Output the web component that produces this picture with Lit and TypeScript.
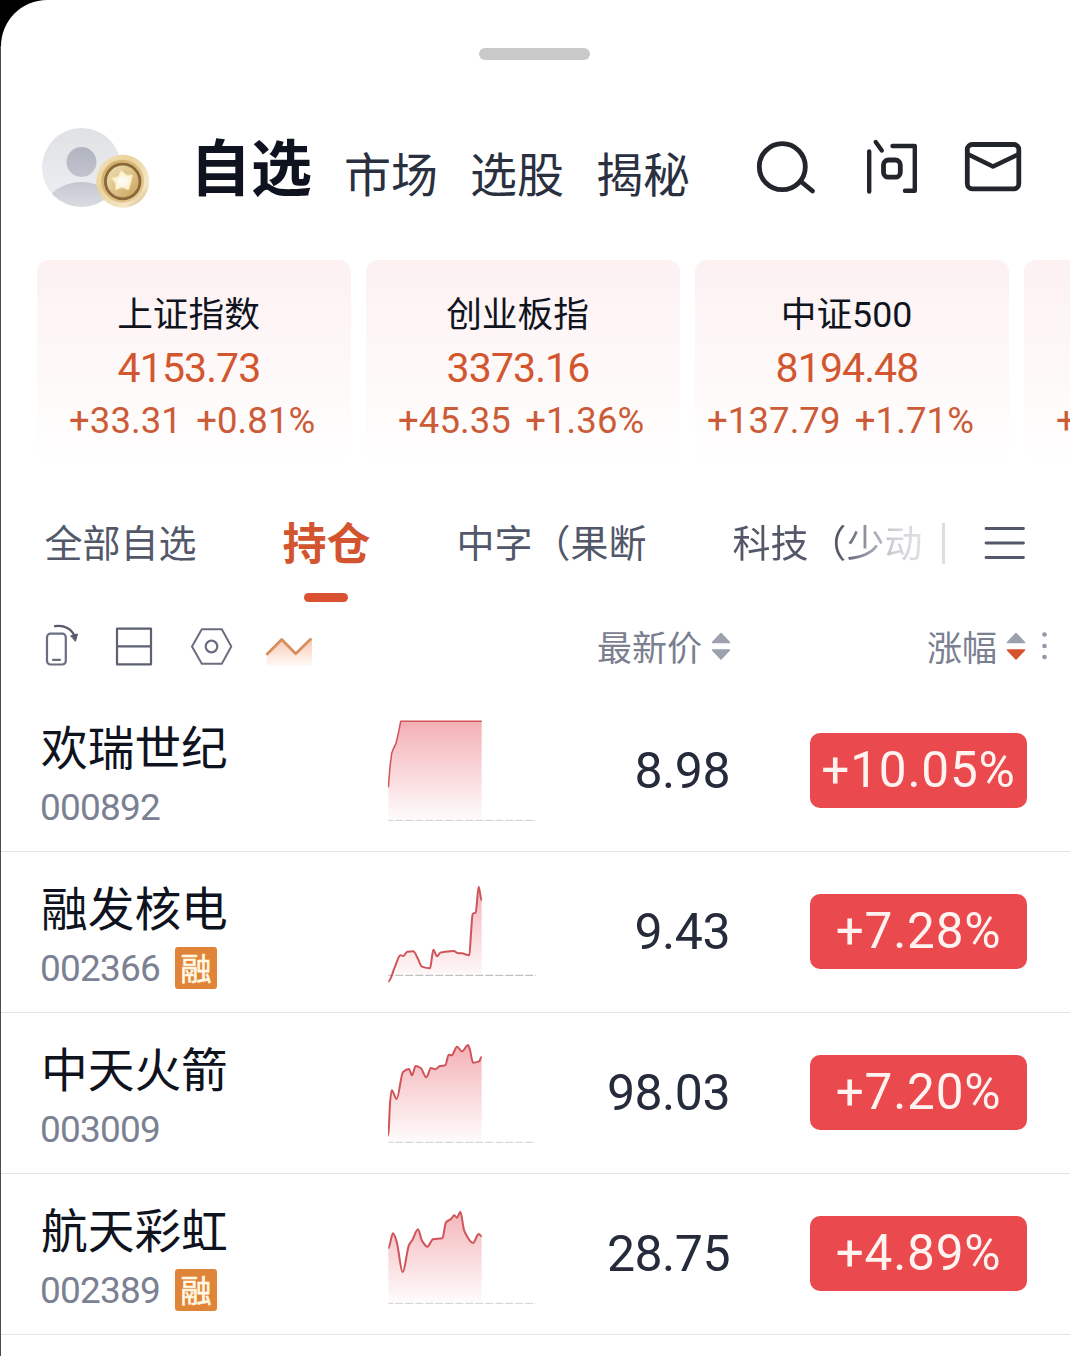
import { LitElement, html, svg, css } from "lit";
import { customElement, property } from "lit/decorators.js";
import { classMap } from "lit/directives/class-map.js";

type Point = [number, number];

interface Stock {
  name: string;
  code: string;
  margin: boolean;
  price: string;
  change: string;
  base: number;
  smooth: boolean;
  points: Point[];
}

interface IndexQuote {
  name: string;
  value: string;
  change: string;
  wide?: boolean;
}

const INDICES: IndexQuote[] = [
  { name: "上证指数", value: "4153.73", change: "+33.31 +0.81%" },
  { name: "创业板指", value: "3373.16", change: "+45.35 +1.36%" },
  { name: "中证500", value: "8194.48", change: "+137.79 +1.71%", wide: true },
  { name: "", value: "", change: "+" },
];

// Chart points live on a 450 x 480 grid, three units per pixel.
const STOCKS: Stock[] = [
  {
    name: "欢瑞世纪", code: "000892", margin: false, price: "8.98", change: "+10.05%", base: 388, smooth: false,
    points: [[1, 289], [6, 227], [11, 187], [15, 176], [24, 157], [31, 127], [38, 91], [281, 91]],
  },
  {
    name: "融发核电", code: "002366", margin: true, price: "9.43", change: "+7.28%", base: 370, smooth: true,
    points: [[1, 389], [21, 344], [37, 310], [46, 312], [58, 299], [76, 298], [89, 319], [102, 344], [126, 349], [130, 329], [136, 293], [147, 313], [157, 302], [171, 299], [198, 297], [208, 303], [221, 304], [244, 310], [249, 244], [254, 186], [263, 181], [272, 104], [281, 146]],
  },
  {
    name: "中天火箭", code: "003009", margin: false, price: "98.03", change: "+7.20%", base: 388, smooth: true,
    points: [[1, 368], [6, 271], [11, 232], [26, 258], [45, 177], [63, 168], [72, 187], [83, 159], [98, 165], [115, 193], [129, 165], [142, 169], [156, 159], [172, 157], [182, 125], [191, 127], [207, 101], [222, 115], [240, 96], [246, 111], [255, 149], [273, 145], [281, 131]],
  },
  {
    name: "航天彩虹", code: "002389", margin: true, price: "28.75", change: "+4.89%", base: 388, smooth: true,
    points: [[1, 223], [15, 178], [26, 203], [44, 295], [63, 213], [73, 198], [90, 166], [102, 200], [118, 218], [135, 196], [163, 193], [174, 145], [189, 135], [199, 124], [207, 131], [217, 113], [229, 171], [255, 207], [272, 180], [281, 187]],
  },
];

function linePath(points: Point[], smooth: boolean): string {
  let d = `M${points[0][0]} ${points[0][1]}`;
  for (let i = 1; i < points.length; i++) {
    const [x1, y1] = points[i - 1];
    const [x2, y2] = points[i];
    if (!smooth) {
      d += `L${x2} ${y2}`;
      continue;
    }
    const slope = (k: number): number => {
      if (k <= 0 || k >= points.length - 1) return 0;
      const a = (points[k][1] - points[k - 1][1]) / (points[k][0] - points[k - 1][0]);
      const b = (points[k + 1][1] - points[k][1]) / (points[k + 1][0] - points[k][0]);
      return a * b <= 0 ? 0 : (2 * a * b) / (a + b);
    };
    const h = (x2 - x1) / 3;
    d += `C${x1 + h} ${y1 + slope(i - 1) * h} ${x2 - h} ${y2 - slope(i) * h} ${x2} ${y2}`;
  }
  return d;
}

@customElement("stock-row")
export class StockRow extends LitElement {
  @property({ attribute: false }) stock!: Stock;

  static styles = css`
    :host { display: block; }
    .row {
      display: grid;
      grid-template-columns: 347px 150px 232px 1fr;
      height: 161px;
      box-sizing: border-box;
      border-bottom: 1px solid #e4e5e8;
      padding: 0 43px 0 40px;
    }
    .title { display: flex; flex-direction: column; padding-top: 26px; }
    .name { font-size: 46.7px; line-height: 56px; color: #0f131e; }
    .meta { display: flex; align-items: center; gap: 15px; height: 42px; margin: 13px 0 0 -1px; }
    .code { font-size: 37px; letter-spacing: -0.8px; line-height: 42px; padding-top: 2px; color: #7b8192; font-family: Roboto, sans-serif; }
    .tag {
      display: flex; align-items: flex-start; justify-content: center;
      width: 42px; height: 42px; border-radius: 3px; background: #e08438;
      color: #fff8e4; font-size: 31px; line-height: 39px; -webkit-text-stroke: 0.6px #fff8e4;
    }
    .chart { width: 150px; height: 160px; display: block; }
    .price {
      font-family: Roboto, sans-serif; font-size: 50px; letter-spacing: -0.5px; line-height: 58px;
      color: #262b3b; text-align: right; padding: 51px 40px 0 0;
    }
    .rate {
      justify-self: end; margin-top: 42px; width: 217px; height: 75px; border-radius: 10px; background: #ea4a4d;
      color: #fff3f1; font-family: Roboto, sans-serif; font-size: 49.5px; line-height: 74px; text-align: center; letter-spacing: 0.8px;
    }
  `;

  render() {
    const s = this.stock;
    const line = linePath(s.points, s.smooth);
    return html`
      <div class="row">
        <div class="title">
          <div class="name">${s.name}</div>
          <div class="meta">
            <span class="code">${s.code}</span>
            ${s.margin ? html`<span class="tag">融</span>` : null}
          </div>
        </div>
        <svg class="chart" viewBox="0 0 450 480">
          <defs>
            <linearGradient id="g" gradientUnits="userSpaceOnUse" x1="0" y1="92" x2="0" y2="388">
              <stop offset="0" stop-color="#e8606a" stop-opacity=".5" />
              <stop offset="1" stop-color="#ea6a72" stop-opacity=".02" />
            </linearGradient>
          </defs>
          <path d="${line}L281 ${s.base}L1 ${s.base}Z" fill="url(#g)" />
          <path d="M1 ${s.base}H444" stroke="${s.base < 388 ? "#b4b4b6" : "#cfcfd1"}" stroke-width="3" stroke-dasharray="24 6" stroke-dashoffset="9" />
          <path d="${line}" fill="none" stroke="#cf5459" stroke-width="${s.smooth ? 6 : 4.5}" stroke-linejoin="round" />
        </svg>
        <div class="price">${s.price}</div>
        <div class="rate">${s.change}</div>
      </div>
    `;
  }
}

@customElement("app-root")
export class AppRoot extends LitElement {
  static styles = css`
    :host {
      display: block; width: 1070px; height: 1356px; overflow: hidden;
      background: linear-gradient(#000 0 46px, #4c4c4e 46px);
      font-family: "Noto Sans CJK SC", sans-serif;
    }
    .sheet {
      margin-left: 1px; height: 1356px; background: #fff; border-top-left-radius: 46px;
      display: flex; flex-direction: column; overflow: hidden;
    }
    svg { display: block; flex: none; }
    .grip { width: 111px; height: 12px; border-radius: 6px; background: #c9c9ca; margin: 48px 0 0 478px; flex: none; }
    .header { display: flex; height: 84px; margin: 66px 0 0 41px; flex: none; }
    .nav { display: flex; padding-left: 40px; width: 600px; height: 84px; align-items: flex-start; flex: none; box-sizing: border-box; }
    .nav-item { font-size: 47px; line-height: 92px; color: #2a3040; margin-left: 32px; white-space: nowrap; }
    .nav-item.on { font-size: 61px; line-height: 78px; font-weight: 700; color: #0e131f; margin: 0; }
    .indices { display: flex; gap: 15px; margin: 50px 0 0 36px; height: 200px; flex: none; }
    .index {
      flex: none; width: 314px; height: 200px; border-radius: 12px; box-sizing: border-box;
      background: linear-gradient(#fdf1f2, #fef8f8 50%, #fffefe);
      padding-top: 28px; white-space: nowrap;
    }
    .index-name { font-family: Roboto, "Noto Sans CJK SC", sans-serif; font-size: 35.7px; line-height: 54px; height: 54px; padding-right: 11px; text-align: center; color: #10141f; }
    .index-value { font-family: Roboto, sans-serif; font-size: 41px; letter-spacing: -0.9px; line-height: 52px; height: 52px; padding-right: 10px; text-align: center; color: #d2572f; }
    .index-change { font-family: Roboto, sans-serif; font-size: 36.5px; letter-spacing: 0.1px; word-spacing: 5px; line-height: 54px; padding-left: 32px; color: #cc5b38; }
    .index-change.wide { padding-left: 12px; }
    .tabs { display: flex; height: 62px; margin-top: 52px; padding-left: 43.5px; flex: none; align-items: center; }
    .tab-list { display: flex; align-items: center; width: 897.5px; height: 62px; flex: none; }
    .tab { font-size: 38px; line-height: 58px; height: 62px; color: #525869; white-space: nowrap; margin-right: 86px; flex: none; }
    .tab.on { font-size: 44px; font-weight: 700; color: #d2552f; }
    .tab.fade {
      margin: 0; background: linear-gradient(90deg, #525869 56%, #cdd0d6 84%, #e0e2e5);
      background-clip: text; -webkit-background-clip: text; color: transparent;
    }
    .rule { width: 3px; height: 41px; background: #dddee2; flex: none; }
    .menu { margin-left: 38px; }
    .underline { width: 44px; height: 9px; border-radius: 5px; background: #d95130; margin: 19px 0 0 303px; flex: none; }
    .columns { display: flex; align-items: center; height: 50px; margin-top: 20px; padding-left: 42px; flex: none; }
    .tools { width: 554px; flex: none; }
    .column { font-size: 35px; line-height: 48px; height: 50px; color: #7b8091; white-space: nowrap; }
    .sort { margin-left: 8px; }
    .spacer { width: 195px; flex: none; }
    .list { margin-top: 19px; }
  `;

  private sortIcon(active: boolean) {
    return html`<svg class="sort" width="22" height="32" viewBox="0 0 22 32">
      <path d="M11 2.500L19.500 11.500H2.500Z" fill="#9da1ae" stroke="#9da1ae" stroke-width="1.600" stroke-linejoin="round" />
      <path d="M11 28L19.500 19H2.500Z" fill=${active ? "#d5532d" : "#9da1ae"} stroke=${active ? "#d5532d" : "#9da1ae"} stroke-width="1.600" stroke-linejoin="round" />
    </svg>`;
  }

  private avatar() {
    return html`<svg width="108" height="84" viewBox="42 126 108 84">
      <defs>
        <linearGradient id="face" x1="0" y1="0" x2="0" y2="1"><stop offset="0" stop-color="#dfe1e5" /><stop offset="1" stop-color="#eff0f3" /></linearGradient>
        <linearGradient id="head" x1="0" y1="0" x2="0" y2="1"><stop offset="0" stop-color="#b1b5c0" /><stop offset="1" stop-color="#c1c4cd" /></linearGradient>
        <linearGradient id="body" x1="0" y1="182" x2="0" y2="207" gradientUnits="userSpaceOnUse"><stop offset="0" stop-color="#c4c7d0" /><stop offset="1" stop-color="#dadce1" /></linearGradient>
        <linearGradient id="rim" x1="0" y1="0" x2="1" y2="1"><stop offset="0" stop-color="#f3e2b8" /><stop offset=".35" stop-color="#ead39d" /><stop offset=".75" stop-color="#f5e8c8" /><stop offset="1" stop-color="#c9a45e" /></linearGradient>
        <linearGradient id="ring" x1="0" y1="0" x2="1" y2="1"><stop offset="0" stop-color="#cfa964" /><stop offset="1" stop-color="#e9d09a" /></linearGradient>
        <linearGradient id="core" x1="0" y1="0" x2="1" y2="1"><stop offset="0" stop-color="#f3e4bd" /><stop offset="1" stop-color="#c99f54" /></linearGradient>
        <clipPath id="round"><circle cx="81.500" cy="167.500" r="39.500" /></clipPath>
      </defs>
      <circle cx="81.500" cy="167.500" r="39.500" fill="url(#face)" />
      <circle cx="81.500" cy="162" r="15" fill="url(#head)" />
      <ellipse cx="81.500" cy="207" rx="35" ry="25" fill="url(#body)" clip-path="url(#round)" />
      <circle cx="122.700" cy="181.200" r="26.500" fill="url(#rim)" />
      <circle cx="122.700" cy="181.200" r="21.500" fill="url(#ring)" />
      <circle cx="122.700" cy="181.500" r="17.300" fill="url(#core)" stroke="#89683a" stroke-width="2.800" />
      <path d="M121 170.500L126.500 175L132.500 175L131 182L128.500 190L122 187.500L115.500 190L115.500 183.500L111.500 178L118 176.500Z" fill="#fcf3d9" stroke="#f3dfae" stroke-width="1" stroke-linejoin="round" />
      <path d="M121 176L128 179L127 185L120 186L117 181Z" fill="#fffaf0" />
    </svg>`;
  }

  private headerIcons() {
    return html`<svg width="290" height="84" viewBox="750 126 290 84" fill="none" stroke="#22252b" stroke-width="4.800" stroke-linecap="round" stroke-linejoin="round">
      <circle cx="782.300" cy="166.700" r="23" />
      <path d="M801.500 182L812.500 191" />
      <path d="M869.200 151.500V191.500M875.700 142L881.800 150.500M892.500 146H914.800V190.800H905" stroke-width="4.400" />
      <rect x="883.500" y="160" width="16.800" height="17.200" rx="5" stroke-width="4.800" />
      <rect x="967.300" y="144.500" width="51.500" height="44.300" rx="5" />
      <path d="M968.500 154.500L993 166.500L1018 154.500" stroke-width="4.500" />
    </svg>`;
  }

  private toolIcons() {
    return html`<svg class="tools" width="554" height="50" viewBox="43 622 554 50" fill="none" stroke="#6a6e7f" stroke-width="2.200" stroke-linecap="round" stroke-linejoin="round">
      <defs>
        <linearGradient id="glow" x1="0" y1="639" x2="0" y2="666" gradientUnits="userSpaceOnUse"><stop offset="0" stop-color="#f3a27a" stop-opacity=".6" /><stop offset="1" stop-color="#f6b596" stop-opacity=".08" /></linearGradient>
      </defs>
      <rect x="47" y="633.700" width="18.800" height="30.800" rx="3.500" />
      <path d="M53 659.800H60" />
      <path d="M55 626.200C64 624.500 72 629 75 637" stroke="#555a6b" />
      <path d="M71 635.800L77.500 634L75.500 641Z" fill="#555a6b" stroke="#555a6b" stroke-width="1" />
      <path d="M117 628.700H151V664.300H117ZM117 646.300H151" stroke="#5c6172" />
      <path d="M192 646.500L201.800 629.300H221.800L231.300 646.500L221.800 663.700H201.800Z" stroke-width="2" />
      <circle cx="211.500" cy="646.500" r="5.800" />
      <path d="M267 654.500L282 639.500L295.500 654L312 639V666H266Z" fill="url(#glow)" stroke="none" />
      <path d="M267.200 654L281.700 639.500L295.700 653.700L310.500 639.200" stroke="#d88f60" stroke-width="2.800" />
    </svg>`;
  }

  render() {
    return html`
      <div class="sheet">
        <div class="grip"></div>
        <div class="header">
          ${this.avatar()}
          <div class="nav">
            ${["自选", "市场", "选股", "揭秘"].map((t, i) => html`<span class=${classMap({ "nav-item": true, on: i === 0 })}>${t}</span>`)}
          </div>
          <div class="icons">${this.headerIcons()}</div>
        </div>
        <div class="indices">
          ${INDICES.map((q) => html`
            <div class="index">
              <div class="index-name">${q.name}</div>
              <div class="index-value">${q.value}</div>
              <div class=${classMap({ "index-change": true, wide: !!q.wide })}>${q.change}</div>
            </div>
          `)}
        </div>
        <div class="tabs">
          <div class="tab-list">
            <span class="tab">全部自选</span>
            <span class="tab on">持仓</span>
            <span class="tab">中字（果断</span>
            <span class="tab fade">科技（少动</span>
          </div>
          <div class="rule"></div>
          <svg class="menu" width="44" height="40" viewBox="0 0 44 40">
            <path d="M3 5.500H40.500M3 20H40.500M3 34.500H40.500" stroke="#555868" stroke-width="2.800" stroke-linecap="round" />
          </svg>
        </div>
        <div class="underline"></div>
        <div class="columns">
          ${this.toolIcons()}
          <span class="column">最新价</span>
          ${this.sortIcon(false)}
          <div class="spacer"></div>
          <span class="column">涨幅</span>
          ${this.sortIcon(true)}
          <svg width="30" height="32" viewBox="0 0 30 32">
            ${[3.5, 15, 26].map((y) => svg`<circle cx="17.500" cy=${y} r="2.300" fill="#9498a6" />`)}
          </svg>
        </div>
        <div class="list">${STOCKS.map((s) => html`<stock-row .stock=${s}></stock-row>`)}</div>
      </div>
    `;
  }
}
